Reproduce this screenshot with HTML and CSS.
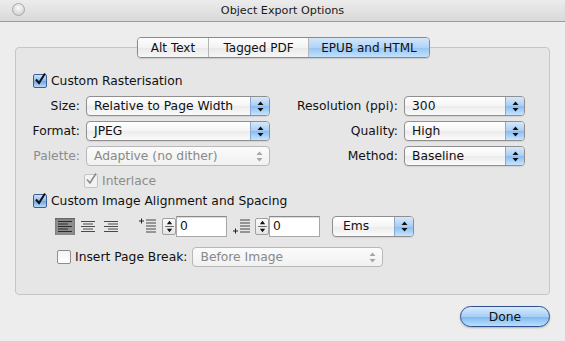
FILE: index.html
```html
<!doctype html>
<html lang="en">
	<head>
		<meta charset="UTF-8">
		<title>Object Export Options</title>
		<link rel="stylesheet" href="styles.css">
	</head>
	<body>
		<div class="window">
			<div class="titlebar">
				<span class="light"></span>
				<span class="title">Object Export Options</span>
			</div>
			<div class="main">
				<div class="tabs">
					<span class="tab">Alt Text</span>
					<span class="tab">Tagged PDF</span>
					<span class="tab active">EPUB and HTML</span>
				</div>
				<div class="panel">
					<div class="check-row">
						<span class="box on"><svg viewBox="0 0 14 14"><path d="M3 7.5 L6 11 L12 1.5" fill="none" stroke="#111" stroke-width="2"/></svg></span>
						<span>Custom Rasterisation</span>
					</div>
					<div class="grid">
						<span class="lbl">Size:</span>
						<div class="popup"><span>Relative to Page Width</span><span class="arrows"><svg viewBox="0 0 7 11"><path d="M3.5 0.5 L6.5 4 L0.5 4Z M0.5 7 L6.5 7 L3.5 10.5Z"/></svg></span></div>
						<span class="lbl">Resolution (ppi):</span>
						<div class="popup"><span>300</span><span class="arrows"><svg viewBox="0 0 7 11"><path d="M3.5 0.5 L6.5 4 L0.5 4Z M0.5 7 L6.5 7 L3.5 10.5Z"/></svg></span></div>

						<span class="lbl">Format:</span>
						<div class="popup"><span>JPEG</span><span class="arrows"><svg viewBox="0 0 7 11"><path d="M3.5 0.5 L6.5 4 L0.5 4Z M0.5 7 L6.5 7 L3.5 10.5Z"/></svg></span></div>
						<span class="lbl">Quality:</span>
						<div class="popup"><span>High</span><span class="arrows"><svg viewBox="0 0 7 11"><path d="M3.5 0.5 L6.5 4 L0.5 4Z M0.5 7 L6.5 7 L3.5 10.5Z"/></svg></span></div>

						<span class="lbl dim">Palette:</span>
						<div class="popup off"><span>Adaptive (no dither)</span><span class="arrows"><svg viewBox="0 0 7 11"><path d="M3.5 0.5 L6.5 4 L0.5 4Z M0.5 7 L6.5 7 L3.5 10.5Z"/></svg></span></div>
						<span class="lbl">Method:</span>
						<div class="popup"><span>Baseline</span><span class="arrows"><svg viewBox="0 0 7 11"><path d="M3.5 0.5 L6.5 4 L0.5 4Z M0.5 7 L6.5 7 L3.5 10.5Z"/></svg></span></div>
					</div>
					<div class="check-row interlace dim">
						<span class="box dis"><svg viewBox="0 0 14 14"><path d="M3 7.5 L6 11 L12 1.5" fill="none" stroke="#8a8a8a" stroke-width="1.6"/></svg></span>
						<span>Interlace</span>
					</div>
					<div class="check-row">
						<span class="box on"><svg viewBox="0 0 14 14"><path d="M3 7.5 L6 11 L12 1.5" fill="none" stroke="#111" stroke-width="2"/></svg></span>
						<span>Custom Image Alignment and Spacing</span>
					</div>
					<div class="align-row">
						<span class="align sel"><svg viewBox="0 0 14 13"><path d="M0 1.5h14M0 4h10M0 6.5h14M0 9h10M0 11.5h14" stroke="#2a2a2a"/></svg></span>
						<span class="align"><svg viewBox="0 0 14 13"><path d="M0 1.5h14M2 4h10M0 6.5h14M2 9h10M0 11.5h14" stroke="#4a4a4a"/></svg></span>
						<span class="align"><svg viewBox="0 0 14 13"><path d="M0 1.5h14M4 4h10M0 6.5h14M4 9h10M0 11.5h14" stroke="#4a4a4a"/></svg></span>
						<span class="indent first"><svg viewBox="0 0 18 16"><path d="M0 3h5M2.5 0.5v5" stroke="#222"/><path d="M7 2h10M7 5h10M7 8h10M7 11h10M7 14h10" stroke="#444"/></svg></span>
						<span class="stepper"><svg viewBox="0 0 12 17"><path d="M6 2 L9 6 L3 6Z M6 15 L9 11 L3 11Z" fill="#111"/><path d="M1 8.5h10" stroke="#555"/></svg></span>
						<span class="field">0</span>
						<span class="indent last"><svg viewBox="0 0 18 16"><path d="M0 13h5M2.5 10.5v5" stroke="#222"/><path d="M7 2h10M7 5h10M7 8h10M7 11h10M7 14h10" stroke="#444"/></svg></span>
						<span class="stepper"><svg viewBox="0 0 12 17"><path d="M6 2 L9 6 L3 6Z M6 15 L9 11 L3 11Z" fill="#111"/><path d="M1 8.5h10" stroke="#555"/></svg></span>
						<span class="field">0</span>
						<div class="popup ems"><span>Ems</span><span class="arrows"><svg viewBox="0 0 7 11"><path d="M3.5 0.5 L6.5 4 L0.5 4Z M0.5 7 L6.5 7 L3.5 10.5Z"/></svg></span></div>
					</div>
					<div class="break-row">
						<span class="box"></span>
						<span class="break-lbl">Insert Page Break:</span>
						<div class="popup off wide"><span>Before Image</span><span class="arrows"><svg viewBox="0 0 7 11"><path d="M3.5 0.5 L6.5 4 L0.5 4Z M0.5 7 L6.5 7 L3.5 10.5Z"/></svg></span></div>
					</div>
				</div>
				<div class="footer">
					<button class="done">Done</button>
				</div>
			</div>
		</div>
	</body>
</html>
```

FILE: styles.css
```css
*{margin:0;padding:0;box-sizing:border-box;}
body{
	width:565px;height:341px;
	background:#ededed;
	font-family:"DejaVu Sans",sans-serif;
	font-size:12.3px;
	color:#111;
	overflow:hidden;
}
.window{width:565px;height:341px;}

/* title bar */
.titlebar{
	height:22px;
	display:flex;
	align-items:center;
	justify-content:center;
	position:relative;
	background:linear-gradient(#ececec,#d9d9d9);
	border-bottom:1px solid #9c9c9c;
}
.light{
	position:absolute;
	left:12px;top:3px;
	width:13px;height:13px;
	border-radius:50%;
	border:1px solid #a8a8a8;
	background:radial-gradient(circle at 50% 35%,#fbfbfb,#d6d6d6 70%,#c4c4c4);
}
.title{font-size:11.2px;color:#1a1a1a;}

.main{padding-top:15px;}

/* tabs */
.tabs{
	position:relative;
	z-index:1;
	display:flex;
	width:293px;height:21px;
	margin:0 0 -11px 137px;
	border:1px solid #8a8a8a;
	border-radius:4px;
	overflow:hidden;
	box-shadow:0 1px 1px rgba(0,0,0,.12);
}
.tab{
	display:flex;
	align-items:center;
	justify-content:center;
	height:100%;
	background:linear-gradient(#fdfdfd,#f3f3f3 50%,#e8e8e8 51%,#f6f6f6);
	border-right:1px solid #b5b5b5;
	font-size:12px;
}
.tab:nth-child(1){width:71px;}
.tab:nth-child(2){width:100px;}
.tab.active{
	flex:1;
	border-right:0;
	background:linear-gradient(#d3e6fb,#b1d3f7 50%,#96c3f1 51%,#c3e2fc);
}

/* panel */
.panel{
	margin:0 15px;
	height:248px;
	padding:23px 0 0 0;
	border:1px solid #c6c6c6;
	border-radius:4px;
	background:#e6e6e6;
}
.check-row{
	height:20px;
	display:flex;
	align-items:center;
	padding-left:17px;
	gap:4px;
}
.box{
	width:14px;height:14px;
	flex:none;
	border:1px solid #8c8c8c;
	border-radius:2px;
	background:linear-gradient(#f4f4f4,#ffffff);
	display:flex;
}
.box svg{width:14px;height:14px;margin:-3px 0 0 -1px;overflow:visible;}
.box.on{
	border-color:#3d5f99;
	background:linear-gradient(#cfe2f8,#8cb9ea 50%,#6ea5e3 51%,#b9dafa);
}
.box.dis{border-color:#c4c4c4;background:#f2f2f2;}
.dim{color:#8c8c8c;}

.grid{
	display:grid;
	grid-template-columns:64px 184px 122px 121px;
	grid-auto-rows:20px;
	column-gap:6px;
	row-gap:5px;
	margin-top:5px;
	align-items:center;
}
.lbl{text-align:right;}

.popup{
	height:20px;
	display:flex;
	align-items:center;
	padding-left:7px;
	border:1px solid #8f8f8f;
	border-radius:4px;
	overflow:hidden;
	background:linear-gradient(#ffffff,#f5f5f5 50%,#ebebeb 51%,#fbfbfb);
	box-shadow:0 1px 1px rgba(0,0,0,.08);
}
.arrows{
	margin-left:auto;
	width:19px;height:100%;
	display:flex;
	align-items:center;
	justify-content:center;
	border-left:1px solid #8aa6d2;
	background:linear-gradient(#d6e8fb,#a9cdf4 50%,#88bcf1 51%,#c6e5ff);
}
.arrows svg{width:7px;height:11px;fill:#111;}
.popup.off{color:#888;border-color:#b8b8b8;background:linear-gradient(#fbfbfb,#f1f1f1);box-shadow:none;}
.popup.off .arrows{background:none;border-left:0;}
.popup.off .arrows svg{fill:#a6a6a6;}

.interlace{margin-top:5px;padding-left:68px;}

.align-row{
	display:flex;
	align-items:center;
	height:22px;
	margin-top:4px;
	padding-left:39px;
}
.align{
	width:20px;height:17px;
	display:flex;
	align-items:center;
	justify-content:center;
	margin-right:3px;
}
.align svg{width:14px;height:13px;}
.align.sel{
	background:#8d8d8d;
	box-shadow:inset 0 1px 2px rgba(0,0,0,.35);
}
.indent{display:flex;margin:0 5px 0 15px;}
.indent svg{width:18px;height:16px;}
.indent.last{margin-left:6px;margin-right:4px;}
.stepper{
	width:14px;height:17px;
	display:flex;
	justify-content:center;
	border:1px solid #a0a0a0;
	border-radius:2px;
	background:linear-gradient(#fafafa,#e4e4e4);
}
.stepper svg{width:11px;height:15px;}
.field{
	width:51px;height:21px;
	display:flex;
	align-items:center;
	padding-left:3px;
	background:#fff;
	border:1px solid #a8a8a8;
	border-top-color:#8a8a8a;
	box-shadow:inset 0 1px 1px rgba(0,0,0,.15);
}
.field:nth-of-type(2){width:50px;}
.popup.ems{width:82px;margin-left:12px;padding-left:10px;height:21px;}

.break-row{
	display:flex;
	align-items:center;
	height:20px;
	margin-top:10px;
	padding-left:41px;
}
.break-lbl{margin:0 5px 0 4px;}
.popup.wide{width:191px;}

/* footer */
.footer{
	display:flex;
	justify-content:flex-end;
	padding:11px 15px 0 0;
}
.done{
	width:90px;height:21px;
	border:1px solid #30508e;
	border-radius:11px;
	font-family:"DejaVu Sans",sans-serif;
	font-size:12.3px;
	color:#111;
	background:linear-gradient(#d8ebfd,#a6cff6 50%,#7db8f0 51%,#b9e0ff);
	box-shadow:0 1px 2px rgba(0,0,0,.25);
}
```
